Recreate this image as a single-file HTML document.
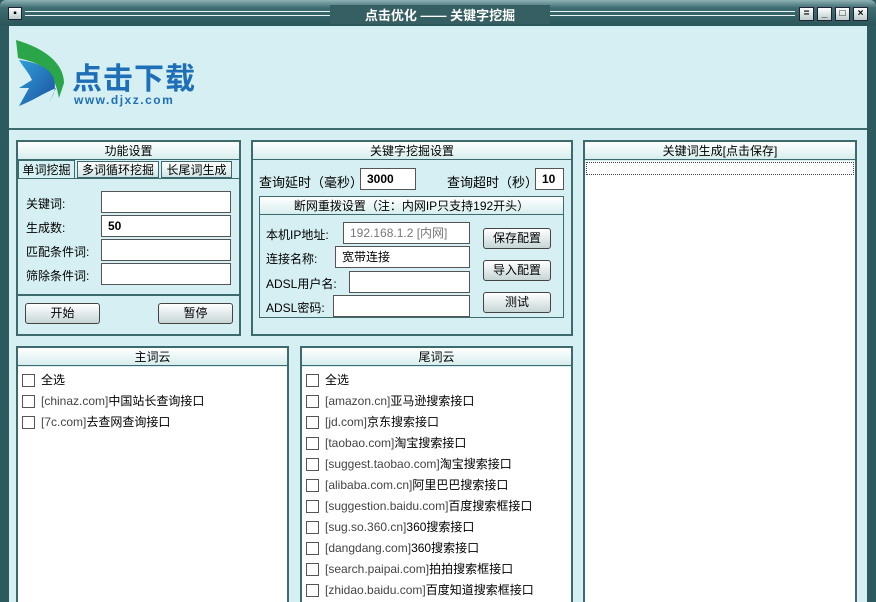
<!DOCTYPE html>
<html style="width:876px;height:602px;overflow:hidden"><head><meta charset="utf-8"><style>
*{margin:0;padding:0;box-sizing:border-box}
body{width:876px;height:602px;overflow:hidden;background:#2d5a5e;font-family:"Liberation Sans","Noto Sans CJK SC",sans-serif;font-size:12px;color:#000;position:relative}
.abs{position:absolute}
.title{left:0;top:0;width:876px;height:26px;background:linear-gradient(#8fb3b5,#3e6d71 30%,#2a5559);border-radius:6px 6px 0 0}
.tline{position:absolute;height:5px;border-top:1px solid #e8f4f4;border-bottom:1px solid #e8f4f4;top:11px}
.ttext{position:absolute;top:5px;left:330px;width:220px;text-align:center;color:#fff;font-weight:bold;font-size:13px;background:#355f63}
.wb{position:absolute;top:7px;width:15px;height:14px;background:linear-gradient(#fff,#bcc);border:1px solid #223;font-size:10px;line-height:12px;text-align:center;font-weight:bold}
.client{left:9px;top:26px;width:858px;height:576px;background:#d5eff2}
.hdr{left:9px;top:128px;width:858px;height:2px;background:#3d6a6d}
.panel{position:absolute;border:2px solid #3d6a6d;background:#d5eff2;overflow:hidden}
.ph{height:18px;background:linear-gradient(#fff,#d7eeee);border-bottom:1px solid #3d6a6d;text-align:center;line-height:18px;font-size:12px}
.inp{position:absolute;background:#fff;border:1px solid #555;height:22px;line-height:20px;padding-left:6px;font-size:12px}
.btn{position:absolute;height:21px;border:1px solid #444;border-radius:3px;background:linear-gradient(#fff,#c7d5d5);text-align:center;line-height:19px;font-size:12px}
.lbl{position:absolute;font-size:12px}
.list{position:absolute;background:#fff}
.item{position:absolute;left:4px;height:16px;line-height:14px;font-size:12px;white-space:nowrap}
.cb{display:inline-block;width:13px;height:13px;border:1px solid #555;vertical-align:middle;margin-right:6px;background:#fff}
.g{color:#444}
</style></head><body>
<div class="abs title">
 <div class="wb" style="left:8px;top:7px;width:14px;height:13px">▪</div>
 <div class="tline" style="left:25px;width:770px"></div>
 <div class="ttext">点击优化 —— 关键字挖掘</div>
 <div class="wb" style="left:799px">=</div>
 <div class="wb" style="left:817px">_</div>
 <div class="wb" style="left:835px">□</div>
 <div class="wb" style="left:853px">×</div>
</div>
<div class="abs client"></div>
<div class="abs hdr"></div>
<svg class="abs" style="left:14px;top:38px" width="60" height="70" viewBox="0 0 60 70">
<defs><linearGradient id="g1" x1="0" y1="0" x2="1" y2="1"><stop offset="0" stop-color="#2f9fd8"/><stop offset="1" stop-color="#1c4fa0"/></linearGradient></defs>
<path d="M2,2 C30,10 50,25 50,45 L45,60 C40,30 25,25 4,20 Z" fill="#2aa54a"/>
<path d="M5,22 C30,25 45,35 40,55 L35,65 L42,50 C30,55 20,62 5,68 L15,50 L5,50 L18,42 C15,35 10,30 5,22Z" fill="url(#g1)"/>
</svg>
<div class="abs" style="left:72px;top:64px;font-size:30px;font-weight:bold;color:#1e6fb7;letter-spacing:1px;line-height:32px">点击下载</div>
<div class="abs" style="left:74px;top:93px;font-size:12px;font-weight:bold;color:#1e6fb7;letter-spacing:1.5px">www.djxz.com</div>

<div class="panel" style="left:16px;top:140px;width:225px;height:196px">
 <div class="ph">功能设置</div>
</div>
<div class="abs" style="left:18px;top:160px;width:57px;height:19px;background:#d5eff2;border:1px solid #3d6a6d;border-bottom:none;text-align:center;line-height:18px">单词挖掘</div>
<div class="abs" style="left:77px;top:161px;width:82px;height:17px;background:linear-gradient(#fff,#d0e4e4);border:1px solid #3d6a6d;text-align:center;line-height:16px">多词循环挖掘</div>
<div class="abs" style="left:161px;top:161px;width:71px;height:17px;background:linear-gradient(#fff,#d0e4e4);border:1px solid #3d6a6d;text-align:center;line-height:16px">长尾词生成</div>
<div class="abs" style="left:18px;top:178px;width:221px;height:2px;border-top:1px solid #3d6a6d"></div>
<div class="abs" style="left:18px;top:294px;width:221px;height:2px;background:#3d6a6d"></div>
<div class="lbl" style="left:26px;top:195px">关键词:</div><div class="inp" style="left:101px;top:191px;width:130px"></div>
<div class="lbl" style="left:26px;top:219px">生成数:</div><div class="inp" style="left:101px;top:215px;width:130px;font-weight:bold">50</div>
<div class="lbl" style="left:26px;top:243px">匹配条件词:</div><div class="inp" style="left:101px;top:239px;width:130px"></div>
<div class="lbl" style="left:26px;top:267px">筛除条件词:</div><div class="inp" style="left:101px;top:263px;width:130px"></div>
<div class="btn" style="left:25px;top:303px;width:75px">开始</div>
<div class="btn" style="left:158px;top:303px;width:75px">暂停</div>

<div class="panel" style="left:251px;top:140px;width:322px;height:196px"><div class="ph">关键字挖掘设置</div></div>
<div class="lbl" style="left:259px;top:172px;font-size:13px">查询延时（毫秒）</div>
<div class="inp" style="left:360px;top:168px;width:56px;font-weight:bold">3000</div>
<div class="lbl" style="left:447px;top:172px;font-size:13px">查询超时（秒）</div>
<div class="inp" style="left:535px;top:168px;width:29px;font-weight:bold">10</div>
<div class="panel" style="left:259px;top:196px;width:305px;height:122px;border-width:1px"><div class="ph">断网重拨设置（注：内网IP只支持192开头）</div></div>
<div class="lbl" style="left:266px;top:226px">本机IP地址:</div><div class="inp" style="left:343px;top:222px;width:127px;color:#777">192.168.1.2 [内网]</div>
<div class="lbl" style="left:266px;top:250px">连接名称:</div><div class="inp" style="left:335px;top:246px;width:135px">宽带连接</div>
<div class="lbl" style="left:266px;top:275px">ADSL用户名:</div><div class="inp" style="left:349px;top:271px;width:121px"></div>
<div class="lbl" style="left:266px;top:299px">ADSL密码:</div><div class="inp" style="left:333px;top:295px;width:137px"></div>
<div class="btn" style="left:483px;top:228px;width:68px">保存配置</div>
<div class="btn" style="left:483px;top:260px;width:68px">导入配置</div>
<div class="btn" style="left:483px;top:292px;width:68px">测试</div>

<div class="panel" style="left:583px;top:140px;width:274px;height:464px"><div class="ph">关键词生成[点击保存]</div>
<div class="list" style="left:0;top:19px;width:270px;height:450px"><div style="margin:1px;height:13px;border:1px dotted #444"></div></div></div>

<div class="panel" style="left:16px;top:346px;width:273px;height:258px"><div class="ph">主词云</div>
<div class="list" style="left:0;top:19px;width:269px;height:250px">
<div class="item" style="top:6px"><span class="cb"></span>全选</div>
<div class="item" style="top:27px"><span class="cb"></span><span class="g">[chinaz.com]</span>中国站长查询接口</div>
<div class="item" style="top:48px"><span class="cb"></span><span class="g">[7c.com]</span>去查网查询接口</div>
</div></div>

<div class="panel" style="left:300px;top:346px;width:273px;height:258px"><div class="ph">尾词云</div>
<div class="list" style="left:0;top:19px;width:269px;height:250px">
<div class="item" style="top:6px"><span class="cb"></span>全选</div>
<div class="item" style="top:27px"><span class="cb"></span><span class="g">[amazon.cn]</span>亚马逊搜索接口</div>
<div class="item" style="top:48px"><span class="cb"></span><span class="g">[jd.com]</span>京东搜索接口</div>
<div class="item" style="top:69px"><span class="cb"></span><span class="g">[taobao.com]</span>淘宝搜索接口</div>
<div class="item" style="top:90px"><span class="cb"></span><span class="g">[suggest.taobao.com]</span>淘宝搜索接口</div>
<div class="item" style="top:111px"><span class="cb"></span><span class="g">[alibaba.com.cn]</span>阿里巴巴搜索接口</div>
<div class="item" style="top:132px"><span class="cb"></span><span class="g">[suggestion.baidu.com]</span>百度搜索框接口</div>
<div class="item" style="top:153px"><span class="cb"></span><span class="g">[sug.so.360.cn]</span>360搜索接口</div>
<div class="item" style="top:174px"><span class="cb"></span><span class="g">[dangdang.com]</span>360搜索接口</div>
<div class="item" style="top:195px"><span class="cb"></span><span class="g">[search.paipai.com]</span>拍拍搜索框接口</div>
<div class="item" style="top:216px"><span class="cb"></span><span class="g">[zhidao.baidu.com]</span>百度知道搜索框接口</div>
</div></div>
</body></html>
